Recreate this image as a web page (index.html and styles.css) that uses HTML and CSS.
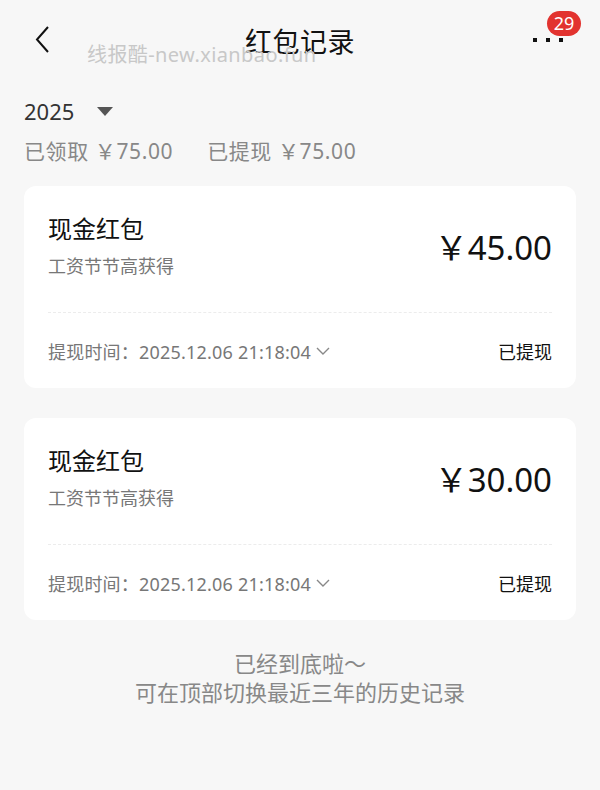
FILE: index.html
```html
<!DOCTYPE html>
<html lang="zh-CN">
<head>
    <meta charset="UTF-8">
    <title>红包记录</title>
    <link rel="stylesheet" href="styles.css">
</head>
<body>
<div class="page">
    <header class="topbar">
        <span class="back">
            <svg width="16" height="28" viewBox="0 0 16 28"><path d="M13 1 L2 13.5 L13 26" fill="none" stroke="#111" stroke-width="2"/></svg>
        </span>
        <h1 class="title">红包记录</h1>
        <span class="more">
            <i></i><i></i><i></i>
            <span class="badge">29</span>
        </span>
        <span class="watermark">线报酷-new.xianbao.fun</span>
    </header>

    <div class="year">
        <span>2025</span>
        <span class="caret"></span>
    </div>
    <div class="summary">
        <span>已领取 ￥75.00</span>
        <span>已提现 ￥75.00</span>
    </div>

    <div class="card">
        <div class="card-top">
            <div>
                <div class="card-name">现金红包</div>
                <div class="card-desc">工资节节高获得</div>
            </div>
            <div class="amount">￥45.00</div>
        </div>
        <div class="card-bottom">
            <span class="time">提现时间：2025.12.06 21:18:04
                <svg width="16" height="10" viewBox="0 0 16 10"><path d="M2 2 L8 8 L14 2" fill="none" stroke="#888" stroke-width="1.4"/></svg>
            </span>
            <span class="status">已提现</span>
        </div>
    </div>

    <div class="card">
        <div class="card-top">
            <div>
                <div class="card-name">现金红包</div>
                <div class="card-desc">工资节节高获得</div>
            </div>
            <div class="amount">￥30.00</div>
        </div>
        <div class="card-bottom">
            <span class="time">提现时间：2025.12.06 21:18:04
                <svg width="16" height="10" viewBox="0 0 16 10"><path d="M2 2 L8 8 L14 2" fill="none" stroke="#888" stroke-width="1.4"/></svg>
            </span>
            <span class="status">已提现</span>
        </div>
    </div>

    <div class="end">
        <p>已经到底啦～</p>
        <p>可在顶部切换最近三年的历史记录</p>
    </div>
</div>
</body>
</html>
```

FILE: styles.css
```css
*, *::before, *::after {
    box-sizing: border-box;
    margin: 0;
    padding: 0;
}
body {
    font-family: "Noto Sans", "Noto Sans CJK SC", sans-serif;
    background: #f7f7f7;
    color: #111;
}
.page {
    width: 600px;
    min-height: 790px;
    padding: 0 24px;
}
.topbar {
    position: relative;
    height: 80px;
    display: flex;
    align-items: center;
    justify-content: space-between;
}
.back {
    display: flex;
    margin-left: 11px;
}
.title {
    font-size: 27px;
    font-weight: 400;
    letter-spacing: 0.5px;
    position: absolute;
    left: 0;
    right: 0;
    text-align: center;
    pointer-events: none;
}
.more {
    position: relative;
    display: flex;
    gap: 9px;
    margin-right: 13px;
    margin-top: 0;
}
.more i {
    width: 4px;
    height: 4px;
    background: #111;
}
.badge {
    position: absolute;
    left: 14px;
    top: -27px;
    min-width: 34px;
    height: 25px;
    padding: 0 6px;
    border-radius: 13px;
    background: #e2332f;
    color: #fff;
    font-size: 18px;
    line-height: 25px;
    text-align: center;
}
.watermark {
    position: absolute;
    left: 63px;
    top: 39px;
    font-size: 20px;
    letter-spacing: 0.4px;
    color: #c8c8c8;
}
.year {
    margin-top: 16px;
    display: flex;
    align-items: center;
    height: 30px;
    font-size: 22px;
    color: #333;
}
.caret {
    margin-left: 23px;
    width: 0;
    height: 0;
    border-left: 8px solid transparent;
    border-right: 8px solid transparent;
    border-top: 9px solid #555;
}
.summary {
    margin-top: 10px;
    display: flex;
    gap: 34px;
    height: 30px;
    line-height: 30px;
    font-size: 21px;
    letter-spacing: 0.6px;
    color: #888;
}
.card {
    margin-top: 20px;
    background: #fff;
    border-radius: 12px;
    padding: 0 24px;
}
.card + .card {
    margin-top: 30px;
}
.card-top {
    display: flex;
    justify-content: space-between;
    align-items: center;
    height: 127px;
    padding-top: 2px;
    border-bottom: 1px dashed #ececec;
}
.card-name {
    font-size: 24px;
    line-height: 36px;
    margin-top: -10px;
}
.card-desc {
    font-size: 18px;
    line-height: 28px;
    margin-top: 5px;
    color: #777;
}
.amount {
    font-size: 33px;
    color: #111;
    margin-top: -8px;
}
.card-bottom {
    height: 75px;
    display: flex;
    justify-content: space-between;
    align-items: center;
    font-size: 18px;
}
.time {
    color: #777;
    display: flex;
    align-items: center;
    gap: 4px;
    letter-spacing: 0.2px;
}
.status {
    color: #111;
}
.end {
    margin-top: 29px;
    text-align: center;
    font-size: 22px;
    line-height: 29px;
    color: #888;
}
```
